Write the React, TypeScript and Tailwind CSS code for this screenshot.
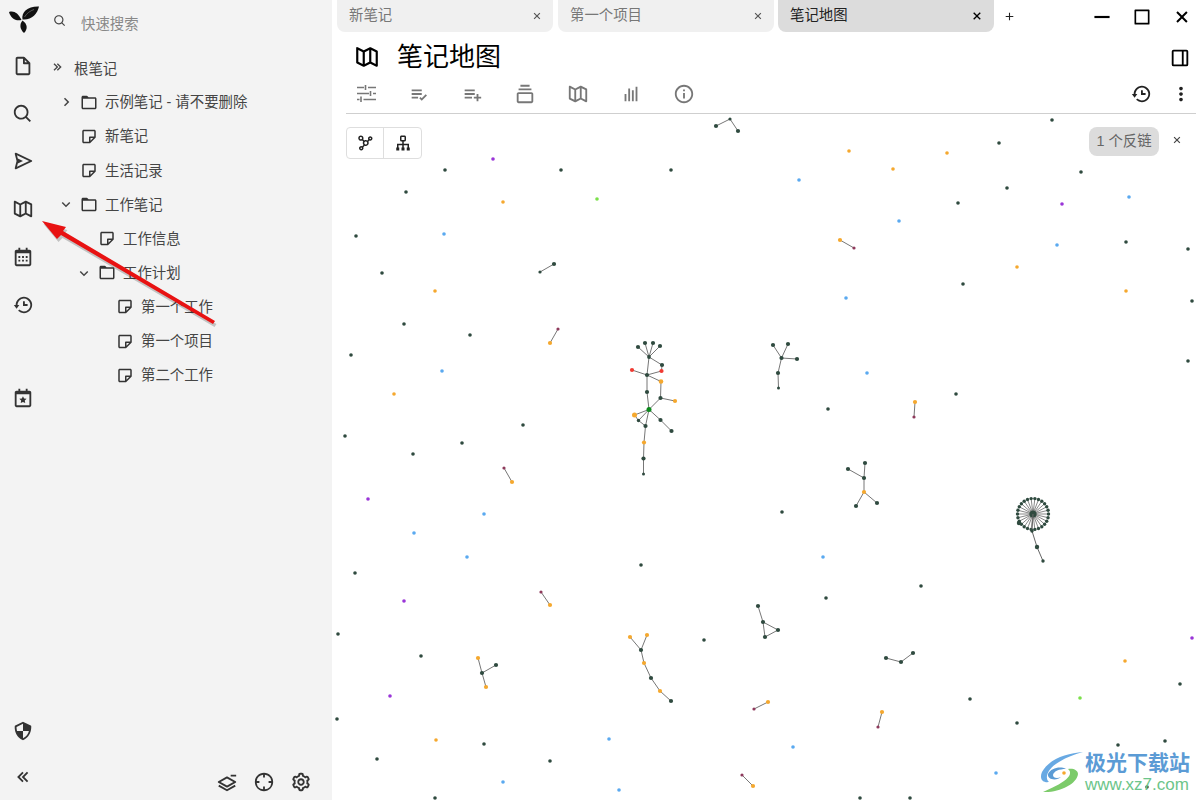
import type { ReactNode } from 'react';
import {
  BiBarChart, BiCalendar, BiCalendarStar, BiChevronDown, BiChevronRight, BiChevronsLeft, BiChevronsRight,
  BiCog, BiCollection, BiCrosshair, BiDockRight, BiDotsVerticalRounded, BiFileBlank, BiFolder, BiHistory,
  BiInfoCircle, BiLayerMinus, BiListCheck, BiListPlus, BiMapAlt, BiMinus, BiNetworkChart, BiNote, BiPlus,
  BiSearch, BiSend, BiShieldQuarter, BiSitemap, BiSquare, BiX,
} from 'react-icons/bi';

const DARK = '#2f4a3f';
const ORANGE = '#f5a82e';
const BLUE = '#5aa9f0';
const PURPLE = '#9a35d8';
const LIME = '#7be04a';
const RED = '#f03a32';
const MAROON = '#8e3a5c';

type Pt = [number, number];

const singles: { color: string; pts: Pt[] }[] = [
  { color: DARK, pts: [[445,170],[561,170],[671,170],[1052,120],[999,143],[1081,172],[1007,188],[958,203],[1126,242],[1188,249],[356,236],[406,192],[382,273],[404,324],[470,335],[351,355],[345,436],[462,443],[413,454],[523,425],[963,284],[1192,301],[1188,361],[956,394],[828,409],[782,512],[355,573],[641,565],[921,586],[826,598],[704,640],[338,634],[421,656],[1180,684],[970,699],[1017,723],[1118,745],[1165,741],[337,719],[484,744],[550,761],[377,759],[435,798],[860,798],[910,798],[1147,787]] },
  { color: ORANGE, pts: [[849,151],[893,169],[947,153],[503,202],[1017,267],[1126,291],[435,291],[394,394],[1125,661],[436,740]] },
  { color: BLUE, pts: [[799,180],[899,221],[444,234],[1057,245],[1129,197],[846,298],[442,371],[867,373],[484,514],[414,533],[467,557],[823,557],[609,739],[793,747],[996,773],[503,782],[619,790]] },
  { color: PURPLE, pts: [[493,159],[1062,204],[368,499],[404,601],[390,696],[1192,638]] },
  { color: LIME, pts: [[597,199],[1080,698]] },
];

// small linked clusters: [x, y, colour, radius]
type GNode = [number, number, string?, number?];
const clusters: { nodes: GNode[]; edges: [number, number][] }[] = [
  { nodes: [[716,126],[730,119,DARK,1.6],[738,131]], edges: [[0,1],[1,2]] },
  { nodes: [[540,272,DARK,1.6],[554,264]], edges: [[0,1]] },
  { nodes: [[840,240,ORANGE],[854,248,MAROON,1.6]], edges: [[0,1]] },
  { nodes: [[550,343,ORANGE],[558,329,MAROON,1.6]], edges: [[0,1]] },
  { nodes: [[504,468,MAROON,1.6],[512,482,ORANGE]], edges: [[0,1]] },
  { nodes: [[915,402,ORANGE],[914,417,MAROON,1.6]], edges: [[0,1]] },
  { nodes: [[541,592,MAROON,1.6],[550,605,ORANGE]], edges: [[0,1]] },
  { nodes: [[754,709,MAROON,1.6],[768,702,ORANGE]], edges: [[0,1]] },
  { nodes: [[882,712,ORANGE],[878,727,MAROON,1.6]], edges: [[0,1]] },
  { nodes: [[742,775,MAROON,1.6],[753,786,ORANGE]], edges: [[0,1]] },
  {
    nodes: [
      [649,357,DARK,1.9],[638,347],[645,343],[653,343],[660,346],[662,365],[647,375],[632,370,RED],[661.5,371,RED],[661,381.5,ORANGE,2.3],
      [647,392],[660.5,398],[675,401,ORANGE],[649,409.5,'#0c8a1c',2.5],[634.5,415,ORANGE,2.5],[638.5,420.5,DARK,1.7],[645.5,426],[660.5,420],[671.5,431],
      [644,442.5,ORANGE],[643.5,458.5],[643.5,474,DARK,1.5],
    ],
    edges: [[0,1],[0,2],[0,3],[0,4],[0,5],[5,8],[0,6],[6,7],[6,8],[6,9],[6,10],[10,13],[9,11],[11,12],[11,13],[13,14],[14,15],[15,13],[13,16],[15,16],[13,17],[17,18],[16,19],[19,20],[20,21]],
  },
  {
    nodes: [[773,345],[788,344],[781.5,358],[797,359],[778,373],[778.5,388,DARK,1.5]],
    edges: [[0,2],[1,2],[2,3],[2,4],[4,5]],
  },
  {
    nodes: [[848,469],[865,463],[864,478],[864,492,ORANGE],[856,506],[877,503]],
    edges: [[0,2],[1,2],[2,3],[3,4],[3,5]],
  },
  {
    nodes: [[758,606],[763,622],[765,637],[778,630]],
    edges: [[0,1],[1,2],[1,3],[2,3]],
  },
  { nodes: [[886,658],[901,662],[913,653]], edges: [[0,1],[1,2]] },
  {
    nodes: [[478,658,ORANGE],[482,673],[496,665],[486,687,ORANGE]],
    edges: [[0,1],[1,2],[1,3]],
  },
  {
    nodes: [[630,637,ORANGE],[647,635,ORANGE],[641,650],[644,663,ORANGE],[651,678],[660,691,ORANGE],[671,701]],
    edges: [[0,2],[1,2],[2,3],[3,4],[4,5],[5,6]],
  },
];

const hub: Pt = [1033, 514];
const spokes = Array.from({ length: 26 }, (_, i) => {
  const a = (i * 360) / 26 * (Math.PI / 180);
  return [hub[0] + Math.cos(a) * 15.5, hub[1] + Math.sin(a) * 15.5] as Pt;
});

const Graph = () => (
  <svg viewBox="332 114 868 686" className="absolute inset-0 h-full w-full">
    {clusters.map((c, i) => (
      <g key={i}>
        {c.edges.map(([a, b], j) => (
          <line key={j} x1={c.nodes[a][0]} y1={c.nodes[a][1]} x2={c.nodes[b][0]} y2={c.nodes[b][1]} stroke="#777" strokeWidth="1" />
        ))}
        {c.nodes.map((n, j) => (
          <circle key={j} cx={n[0]} cy={n[1]} r={n[3] ?? 2.1} fill={n[2] ?? DARK} />
        ))}
      </g>
    ))}
    {spokes.map((p, i) => (
      <g key={i}>
        <line x1={hub[0]} y1={hub[1]} x2={p[0]} y2={p[1]} stroke="#555" strokeWidth="0.7" />
        <circle cx={p[0]} cy={p[1]} r="1.7" fill={DARK} />
      </g>
    ))}
    <circle cx={hub[0]} cy={hub[1]} r="3.6" fill={DARK} />
    <path d="M1033 514L1032 531L1037 547L1043 561" fill="none" stroke="#666" strokeWidth="1" />
    <circle cx="1032" cy="531" r="1.7" fill={DARK} />
    <circle cx="1037" cy="547" r="2.2" fill={DARK} />
    <circle cx="1043" cy="561" r="1.7" fill={DARK} />
    <circle cx="1019" cy="523" r="2.2" fill={DARK} />
    {singles.map((s) => s.pts.map((p, i) => <circle key={s.color + i} cx={p[0]} cy={p[1]} r="1.8" fill={s.color} />))}
  </svg>
);

// viewBox matches page pixels of the rail's top corner
const Logo = () => (
  <svg viewBox="0 0 46 42" className="h-[42px] w-[46px]">
    <path d="M21.5 20C18 13 14 10.5 9 12C10.5 17.5 15 21.5 21.5 20Z" fill="#111" />
    <path d="M22.5 19.5C21 12 28 6 39 6.5C37.5 14 31 20.5 22.5 19.5Z" fill="#111" />
    <path d="M24 33C19.5 29 19.5 24 22.5 20.5C27.5 24 28 29 24 33Z" fill="#111" />
    <path d="M24.5 17C27 13 30 11 34 9.5" fill="none" stroke="#888" strokeWidth="0.6" />
  </svg>
);

const TuneIcon = () => (
  <svg viewBox="0 0 22 22" className="h-[22px] w-[22px]" fill="none" stroke="#777" strokeWidth="1.6">
    <path d="M2 4.5H9M13 4.5H21M10.5 2V7" />
    <path d="M2 10.5H14M18 10.5H21M15.5 8V13" />
    <path d="M2 16.5H4.5M8.5 16.5H21M6 13.5V19" />
  </svg>
);

const RailItem = ({ children, className = '' }: { children: ReactNode; className?: string }) => (
  <div className={`flex h-[47.8px] items-center justify-center text-[22px] text-[#333] ${className}`}>{children}</div>
);

const TreeRow = ({ indent, toggle, icon, label }: { indent: string; toggle?: ReactNode; icon: ReactNode; label: string }) => (
  <div className={`flex h-[34.15px] items-center text-[#454545] ${indent}`}>
    <span className="flex w-[18px] justify-center text-[20px]">{toggle}</span>
    <span className="ml-[5px] flex w-[18px] justify-center text-[19px] text-[#333]">{icon}</span>
    <span className="ml-[7px] mt-[2px] text-[14.4px]">{label}</span>
  </div>
);

const Tab = ({ title, active, className = '' }: { title: string; active?: boolean; className?: string }) => (
  <div className={`flex h-8 w-[216px] items-center justify-between rounded-b-lg pl-3 pr-[9px] text-[14.4px] ${active ? 'bg-[#dcdcdc] text-[#222]' : 'bg-[#f0f0f0] text-[#777]'} ${className}`}>
    <span>{title}</span>
    <BiX className={active ? 'text-[16px] text-black' : 'text-[14px] text-[#555]'} />
  </div>
);

const toolbar = [BiListCheck, BiListPlus, BiCollection, BiMapAlt, BiBarChart, BiInfoCircle];

export default function App() {
  return (
    <div className="relative flex h-[800px] w-[1200px] overflow-hidden bg-white font-['Liberation_Sans','Noto_Sans_CJK_SC',sans-serif]">
      {/* Sidebar */}
      <aside className="flex w-[332px] shrink-0 bg-[#f3f3f3]">
        <nav className="flex w-[46px] shrink-0 flex-col">
          <Logo />
          <RailItem><BiFileBlank /></RailItem>
          <RailItem><BiSearch /></RailItem>
          <RailItem><BiSend /></RailItem>
          <RailItem><BiMapAlt /></RailItem>
          <RailItem><BiCalendar /></RailItem>
          <RailItem><BiHistory /></RailItem>
          <RailItem className="mt-[45px]"><BiCalendarStar /></RailItem>
          <RailItem className="mt-auto mb-[-2px]"><BiShieldQuarter /></RailItem>
          <RailItem className="mb-[-1px]"><BiChevronsLeft /></RailItem>
        </nav>
        <div className="flex min-w-0 flex-1 flex-col">
          <div className="flex h-[46px] items-center pl-[7px] text-[14.4px] text-[#888]">
            <BiSearch className="mb-1 text-[14px] text-[#444]" />
            <span className="ml-[14px] mt-1">快速搜索</span>
          </div>
          <div className="flex h-[44px] items-center pl-[4px] text-[14.4px] text-[#454545]">
            <BiChevronsRight className="mb-[2px] text-[16px]" />
            <span className="ml-2 mt-[3px]">根笔记</span>
          </div>
          <div className="-mt-[5px]">
            <TreeRow indent="pl-[11px]" toggle={<BiChevronRight />} icon={<BiFolder />} label="示例笔记 - 请不要删除" />
            <TreeRow indent="pl-[11px]" icon={<BiNote />} label="新笔记" />
            <TreeRow indent="pl-[11px]" icon={<BiNote />} label="生活记录" />
            <TreeRow indent="pl-[11px]" toggle={<BiChevronDown />} icon={<BiFolder />} label="工作笔记" />
            <TreeRow indent="pl-[29px]" icon={<BiNote />} label="工作信息" />
            <TreeRow indent="pl-[29px]" toggle={<BiChevronDown />} icon={<BiFolder />} label="工作计划" />
            <TreeRow indent="pl-[47px]" icon={<BiNote />} label="第一个工作" />
            <TreeRow indent="pl-[47px]" icon={<BiNote />} label="第一个项目" />
            <TreeRow indent="pl-[47px]" icon={<BiNote />} label="第二个工作" />
          </div>
          <div className="mt-auto mb-[7px] flex justify-end gap-[15px] pr-[20px] text-[22px] text-[#333]">
            <BiLayerMinus />
            <BiCrosshair />
            <BiCog />
          </div>
        </div>
      </aside>

      {/* Main */}
      <main className="flex min-w-0 flex-1 flex-col">
        <div className="flex h-8 items-start">
          <div className="ml-[5px] flex gap-[5px]">
            <Tab title="新笔记" />
            <Tab title="第一个项目" />
            <Tab title="笔记地图" active className="-ml-px" />
          </div>
          <BiPlus className="ml-[9px] mt-[10px] text-[13px] text-[#222]" />
          <div className="-mr-[2px] ml-auto flex text-black">
            <span className="flex h-[34px] w-10 items-center justify-center text-[26px]"><BiMinus /></span>
            <span className="flex h-[34px] w-10 items-center justify-center text-[20px]"><BiSquare /></span>
            <span className="flex h-[34px] w-10 items-center justify-center text-[24px]"><BiX /></span>
          </div>
        </div>
        <div className="flex h-12 items-center pl-[22px] pr-[9px]">
          <BiMapAlt className="mt-[2px] text-[26px] text-black" />
          <h1 className="ml-[17px] mt-[2px] text-[26px] font-normal text-black">笔记地图</h1>
          <BiDockRight className="ml-auto mt-1 text-[22px] text-black" />
        </div>
        <div className="ml-[14px] mr-1 flex h-[34px] items-start border-b border-[#cfcfcf] pl-[9px]">
          <div className="flex h-7 items-center gap-[31px] text-[22px] text-[#777]">
            <TuneIcon />
            {toolbar.map((Icon, i) => (
              <Icon key={i} />
            ))}
          </div>
          <div className="ml-auto flex h-7 items-center gap-[18px] pr-[4px] text-[22px] text-[#222]">
            <BiHistory />
            <BiDotsVerticalRounded />
          </div>
        </div>

        <div className="relative flex-1 overflow-hidden">
          <Graph />
          <div className="absolute left-[14px] top-[13px] flex h-8 rounded border border-[#dedede] bg-white text-[18px] text-[#222]">
            <span className="flex w-[37px] items-center justify-center border-r border-[#dedede]"><BiNetworkChart /></span>
            <span className="flex w-[37px] items-center justify-center"><BiSitemap /></span>
          </div>
          <div className="absolute right-[41px] top-[13px] flex h-[29px] w-[70px] items-center justify-center rounded-lg bg-[#dcdcdc] text-[14.4px] text-[#666]">1 个反链</div>
          <BiX className="absolute right-[16px] top-[19px] text-[14px] text-[#444]" />
        </div>
      </main>

      {/* Red arrow annotation */}
      <svg viewBox="0 0 1200 800" className="pointer-events-none absolute inset-0 h-full w-full">
        <polygon points="42,221 66,227 63,231 215,321 213,324 61,235 57,239" fill="#000" opacity="0.2" transform="translate(1.5 3)" />
        <polygon points="42,221 66,227 63,231 215,321 213,324 61,235 57,239" fill="#e81212" />
      </svg>

      {/* Watermark */}
      <div className="absolute bottom-[6px] right-[10px] flex items-center">
        <svg viewBox="0 0 46 44" className="h-11 w-[46px]">
          <path d="M44 2C28 3 10 9 3 22C0 29 4 33 10 32C5 28 9 18 20 12C28 7 36 4 44 2Z" fill="#68a9e3" />
          <path d="M9 24C12 18 21 16 27 19C20 19 15 21 14 25C14 28 18 29 22 27C18 31 8 30 9 24Z" fill="#5b9bd5" />
          <path d="M4 42C20 43 38 34 39 24C39 20 34 18 29 19C33 22 31 27 25 31C18 36 10 39 4 42Z" fill="#7ccb6a" />
          <circle cx="25" cy="23" r="1.8" fill={ORANGE} />
        </svg>
        <div className="flex flex-col leading-none">
          <span className="text-[21px] font-bold leading-[25px] text-[#5b9bd5]">极光下载站</span>
          <span className="text-[17px] leading-[19px] text-[#6cc58a]">www.xz7.com</span>
        </div>
      </div>
    </div>
  );
}
